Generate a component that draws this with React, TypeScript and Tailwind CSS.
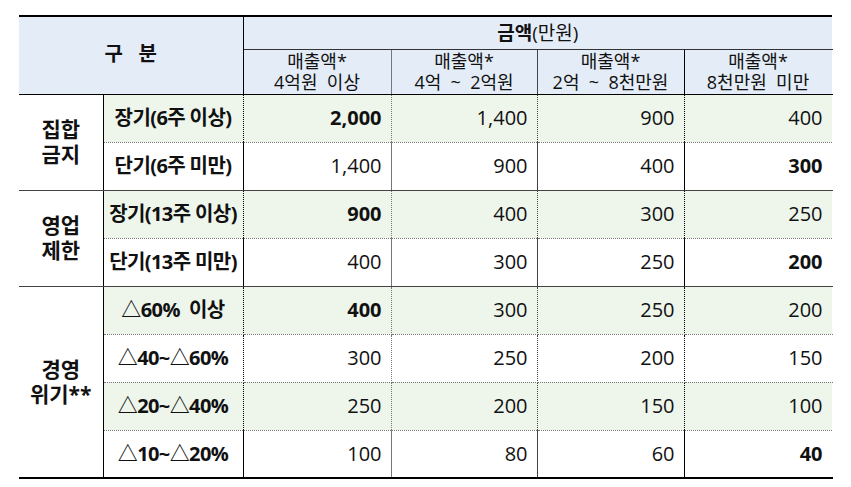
import React from 'react';

type Row = {
  label: string;
  values: string[];
  bold: number;
  green: boolean;
  last: boolean;
};

const groups: { name: string[]; rows: Row[] }[] = [
  {
    name: ['집합', '금지'],
    rows: [
      { label: '장기(6주 이상)', values: ['2,000', '1,400', '900', '400'], bold: 0, green: true, last: false },
      { label: '단기(6주 미만)', values: ['1,400', '900', '400', '300'], bold: 3, green: false, last: true },
    ],
  },
  {
    name: ['영업', '제한'],
    rows: [
      { label: '장기(13주 이상)', values: ['900', '400', '300', '250'], bold: 0, green: true, last: false },
      { label: '단기(13주 미만)', values: ['400', '300', '250', '200'], bold: 3, green: false, last: true },
    ],
  },
  {
    name: ['경영', '위기**'],
    rows: [
      { label: '△60%  이상', values: ['400', '300', '250', '200'], bold: 0, green: true, last: false },
      { label: '△40~△60%', values: ['300', '250', '200', '150'], bold: -1, green: false, last: false },
      { label: '△20~△40%', values: ['250', '200', '150', '100'], bold: -1, green: true, last: false },
      { label: '△10~△20%', values: ['100', '80', '60', '40'], bold: 3, green: false, last: true },
    ],
  },
];

const headers = [
  ['매출액*', '4억원  이상'],
  ['매출액*', '4억  ~  2억원'],
  ['매출액*', '2억  ~  8천만원'],
  ['매출액*', '8천만원  미만'],
];

const colRight = ['border-r-[#777]', 'border-r-[#444]', 'border-r-black', 'border-r-transparent'];

const App = () => {
  return (
    <div className="w-[851px] h-[487px] bg-white overflow-hidden pt-[15px] pl-[19px] text-[#111]" style={{ fontFamily: '"Open Sans", "Noto Sans CJK KR", sans-serif' }}>
      <table className="table-fixed border-collapse w-[813px]">
        <colgroup>
          <col className="w-[84px]" />
          <col className="w-[140px]" />
          <col className="w-[148px]" />
          <col className="w-[146px]" />
          <col className="w-[147px]" />
          <col className="w-[148px]" />
        </colgroup>
        <thead>
          <tr className="h-[33px]">
            <th rowSpan={2} colSpan={2} className="bg-[#e4ecf7] border-t-2 border-t-black border-b border-b-black border-r border-r-black text-[20px] font-bold whitespace-pre pb-[2px]">
              구   분
            </th>
            <th colSpan={4} className="bg-[#e4ecf7] border-t-2 border-t-black border-b border-b-[#333] text-[19px] leading-[26px] font-normal">
              <span className="font-bold">금액</span>(만원)
            </th>
          </tr>
          <tr className="h-[45px]">
            {headers.map((h, i) => (
              <th key={i} className={`bg-[#e4ecf7] border-b border-b-black border-r ${colRight[i]} text-[18px] font-normal leading-[21px] whitespace-pre`}>
                <div>{h[0]}</div>
                <div>{h[1]}</div>
              </th>
            ))}
          </tr>
        </thead>
        <tbody>
          {groups.map((g, gi) =>
            g.rows.map((r, ri) => {
              const bottom = r.last
                ? gi === groups.length - 1
                  ? 'border-b-2 border-b-black'
                  : 'border-b border-b-[#444]'
                : 'border-b border-dotted border-b-[#777]';
              const bg = r.green ? 'bg-[#eef6ec]' : 'bg-white';
              return (
                <tr key={`${gi}-${ri}`} className="h-[48px]">
                  {ri === 0 && (
                    <td rowSpan={g.rows.length} className={`bg-white border-r border-r-black text-center text-[21px] font-bold leading-[25px] ${gi === groups.length - 1 ? 'border-b-2 border-b-black' : 'border-b border-b-[#444]'}`}>
                      <div>{g.name[0]}</div>
                      <div>{g.name[1]}</div>
                    </td>
                  )}
                  <td className={`${bg} ${bottom} border-r border-r-black text-center text-[20px] font-bold tracking-[-0.6px] whitespace-pre`}>
                    {r.label}
                  </td>
                  {r.values.map((v, vi) => (
                    <td key={vi} className={`${bg} ${bottom} border-r ${colRight[vi]} text-right pr-[9px] text-[20px] ${r.bold === vi ? 'font-bold' : 'font-normal'}`}>
                      {v}
                    </td>
                  ))}
                </tr>
              );
            })
          )}
        </tbody>
      </table>
    </div>
  );
};

export default App;
